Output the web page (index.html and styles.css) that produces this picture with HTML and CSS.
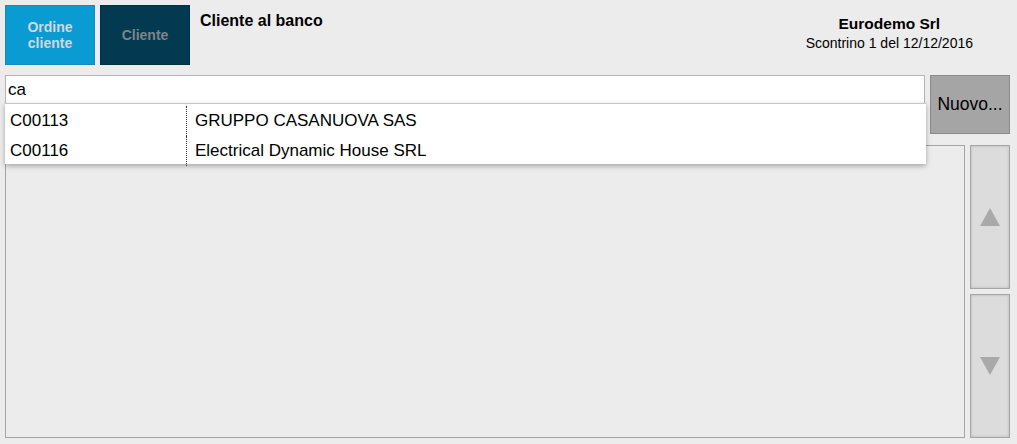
FILE: index.html
```html
<!DOCTYPE html>
<html>
<head>
<meta charset="utf-8">
<link rel="stylesheet" href="styles.css">
</head>
<body>
<div class="app">
  <div class="header">
    <button class="tab tab-order">Ordine<br>cliente</button>
    <button class="tab tab-client">Cliente</button>
    <div class="title">Cliente al banco</div>
    <div class="company">
      <div class="company-name">Eurodemo Srl</div>
      <div class="receipt">Scontrino 1 del 12/12/2016</div>
    </div>
  </div>
  <div class="search-row">
    <div class="search-input">ca</div>
    <button class="new-btn">Nuovo...</button>
  </div>
  <div class="list-row">
    <div class="list-box"></div>
    <div class="scroll-col">
      <button class="scroll-btn"><span class="tri-up"></span></button>
      <button class="scroll-btn"><span class="tri-down"></span></button>
    </div>
  </div>
  <div class="dropdown">
    <div class="dd-row"><div class="dd-code">C00113</div><div class="dd-name">GRUPPO CASANUOVA SAS</div></div>
    <div class="dd-row"><div class="dd-code">C00116</div><div class="dd-name">Electrical Dynamic House SRL</div></div>
  </div>
</div>
</body>
</html>
```

FILE: styles.css
```css
html, body {
  margin: 0;
  padding: 0;
  background: #ececec;
}
body {
  font-family: "Liberation Sans", Arial, sans-serif;
  width: 1017px;
  height: 444px;
  overflow: hidden;
}
.app {
  position: relative;
  padding: 5px 7px 6px 5px;
  height: 433px;
  display: flex;
  flex-direction: column;
}
.header {
  display: flex;
  height: 60px;
  gap: 5px;
}
.tab {
  width: 90px;
  height: 60px;
  border: 1px solid transparent;
  font-family: "Liberation Sans", Arial, sans-serif;
  font-weight: bold;
  font-size: 14px;
  line-height: 16px;
  padding: 0;
}
.tab-order {
  background: #0a9bd3;
  border-color: #1a88b8;
  color: #cfd8de;
}
.tab-client {
  background: #033a51;
  border-color: #02303f;
  color: #7d8589;
}
.title {
  margin-left: 5px;
  padding-top: 7px;
  font-weight: bold;
  font-size: 16px;
  color: #000;
}
.company {
  margin-left: auto;
  margin-right: 37px;
  padding-top: 9px;
  text-align: center;
  color: #000;
}
.company-name {
  font-weight: bold;
  font-size: 15.5px;
  line-height: 20px;
}
.receipt {
  font-size: 14px;
  line-height: 19px;
}
.search-row {
  display: flex;
  gap: 5px;
  margin-top: 10px;
  height: 59px;
}
.search-input {
  height: 27px;
  background: #fff;
  border: 1px solid #b4b4b4;
  font-size: 17px;
  line-height: 27px;
  padding-left: 2px;
  box-sizing: content-box;
  width: 916px;
}
.new-btn {
  width: 80px;
  height: 59px;
  background: #a5a5a5;
  border: 1px solid #8a8a8a;
  font-family: "Liberation Sans", Arial, sans-serif;
  font-size: 17.5px;
  color: #000;
  padding: 0;
}
.list-row {
  display: flex;
  gap: 5px;
  margin-top: 11px;
  flex: 1;
}
.list-box {
  flex: 1;
  border: 1px solid #a4a4a4;
  background: #ececec;
}
.scroll-col {
  width: 40px;
  display: flex;
  flex-direction: column;
  gap: 5px;
}
.scroll-btn {
  flex: 1;
  background: #dcdcdc;
  border: 1px solid #a6a6a6;
  box-shadow: inset 0 0 3px rgba(0,0,0,0.18);
  padding: 0;
  display: flex;
  align-items: center;
  justify-content: center;
}
.tri-up {
  width: 0;
  height: 0;
  border-left: 10px solid transparent;
  border-right: 10px solid transparent;
  border-bottom: 18px solid #a9a9a9;
}
.tri-down {
  width: 0;
  height: 0;
  border-left: 10px solid transparent;
  border-right: 10px solid transparent;
  border-top: 18px solid #a9a9a9;
}
.dropdown {
  position: absolute;
  left: 5px;
  top: 103px;
  width: 921px;
  height: 61px;
  padding-top: 2px;
  background: #fff;
  border-top: 1px solid #c8c8c8;
  box-sizing: border-box;
  box-shadow: 0 2px 5px rgba(0,0,0,0.3);
  display: flex;
  flex-direction: column;
}
.dd-row {
  display: flex;
  height: 30px;
  font-size: 17px;
  line-height: 30px;
  color: #000;
}
.dd-code {
  width: 176px;
  padding-left: 5px;
  border-right: 1px dotted #333;
}
.dd-name {
  padding-left: 8px;
}
```
